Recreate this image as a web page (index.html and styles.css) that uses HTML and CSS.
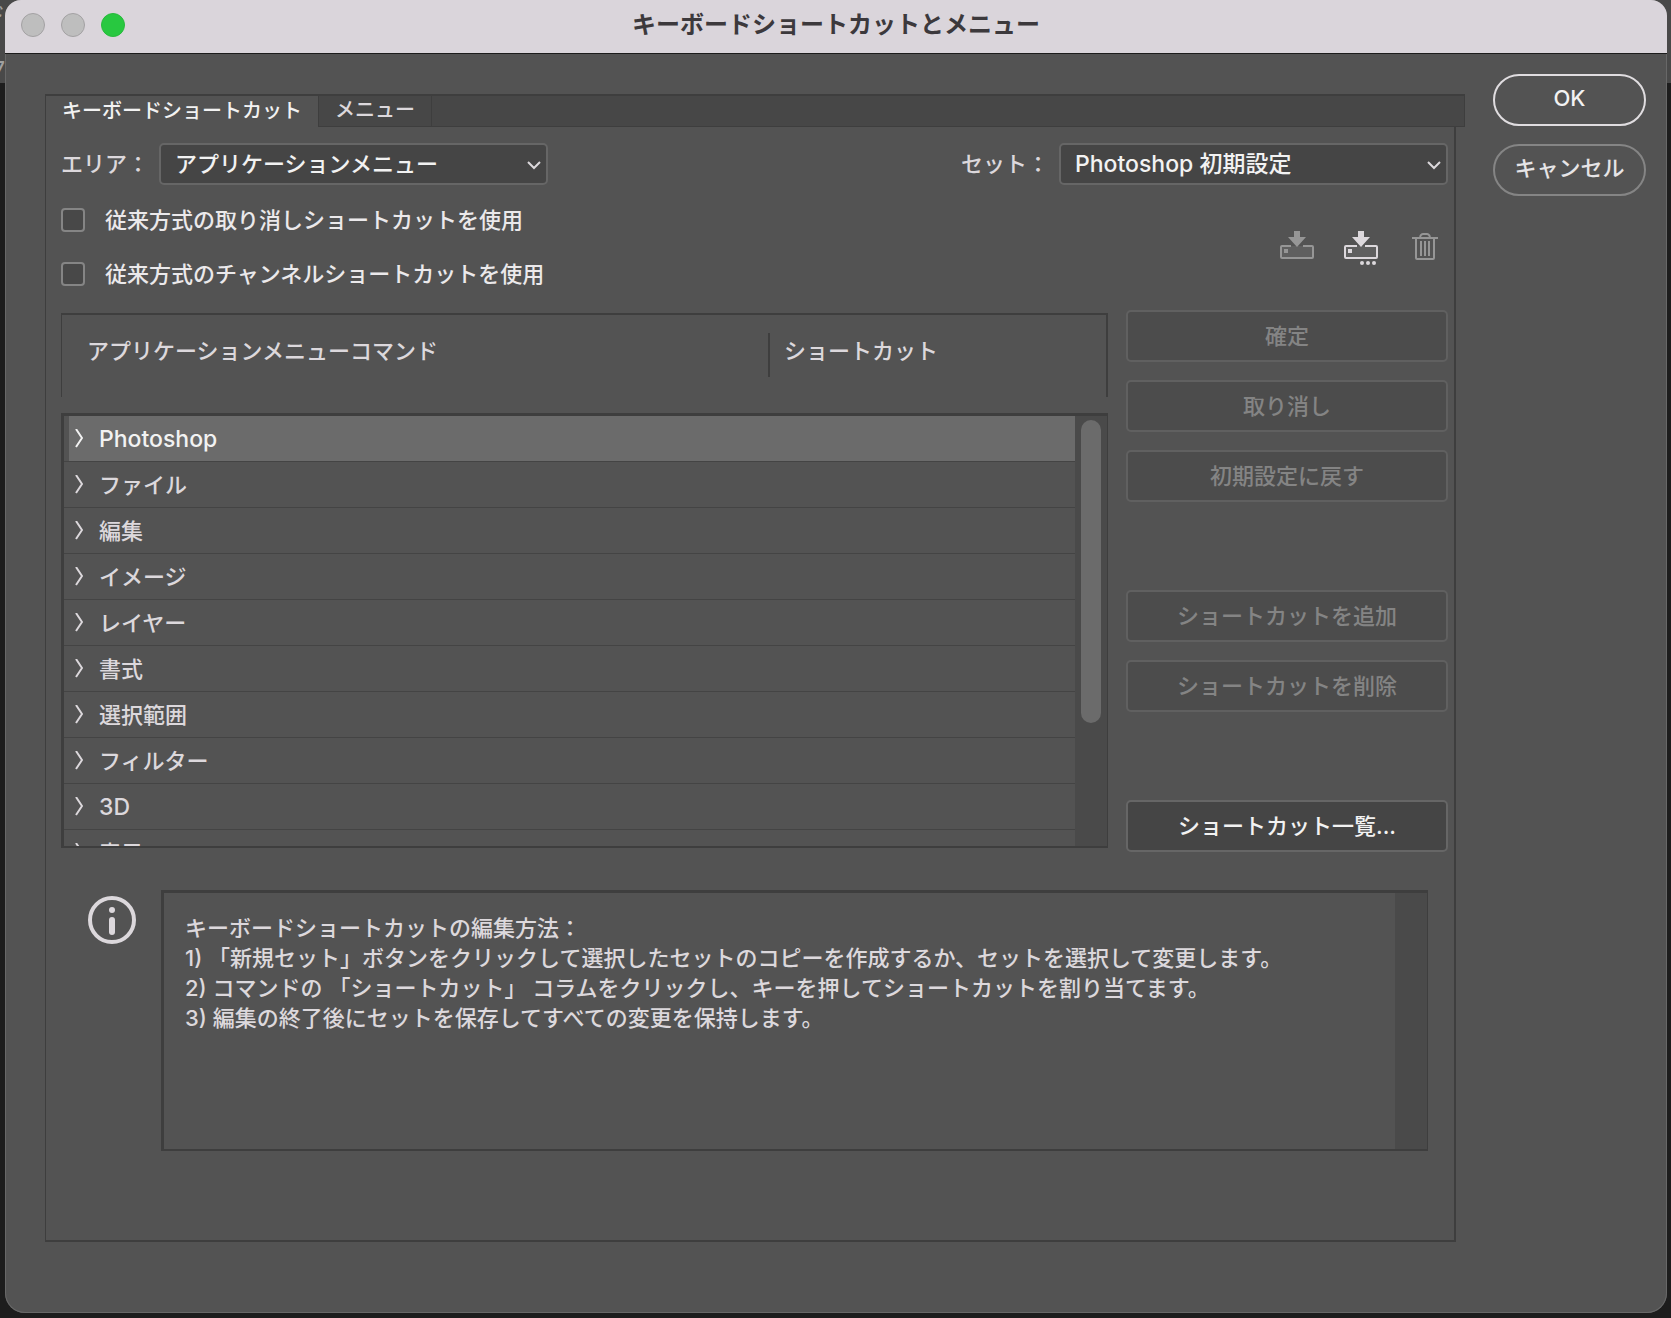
FILE: index.html
```html
<!DOCTYPE html>
<html lang="ja">
<head>
<meta charset="utf-8">
<meta name="viewport" content="width=device-width, initial-scale=1">
<title>キーボードショートカットとメニュー</title>
<link rel="stylesheet" href="styles.css">
</head>
<body>
<div class="backdrop" aria-hidden="true"><span>ド</span><span>7</span></div>
<main class="window">
  <header class="titlebar">
    <div class="lights">
      <button class="light" type="button" aria-label="閉じる"></button>
      <button class="light" type="button" aria-label="しまう"></button>
      <button class="light light-zoom" type="button" aria-label="拡大"></button>
    </div>
    <h1 class="title">キーボードショートカットとメニュー</h1>
  </header>

  <form class="content">
    <section class="panel">
      <div class="tabs" role="tablist">
        <button class="tab tab-active" type="button" role="tab" aria-selected="true">キーボードショートカット</button>
        <button class="tab" type="button" role="tab" aria-selected="false">メニュー</button>
      </div>

      <div class="panel-body">
        <div class="selectors">
          <div class="field">
            <label for="area">エリア：</label>
            <div class="select">
              <select id="area"><option>アプリケーションメニュー</option></select>
              <svg class="select-arrow" viewBox="0 0 14 9"><path d="M1 1l6 6 6-6"/></svg>
            </div>
          </div>
          <div class="field">
            <label for="set">セット：</label>
            <div class="select">
              <select id="set" class="latin"><option>Photoshop 初期設定</option></select>
              <svg class="select-arrow" viewBox="0 0 14 9"><path d="M1 1l6 6 6-6"/></svg>
            </div>
          </div>
        </div>

        <div class="options">
          <div class="checks">
            <label class="check"><input type="checkbox">従来方式の取り消しショートカットを使用</label>
            <label class="check"><input type="checkbox">従来方式のチャンネルショートカットを使用</label>
          </div>
          <div class="set-actions">
            <button class="icon-button icon-dim" type="button" aria-label="セットを保存">
              <svg width="34" height="36" viewBox="0 0 34 36">
                <path class="tint" d="M2 15h30v11H2z"/>
                <path class="fill" d="M14 0h6v6h6l-9 10-9-10h6z"/>
                <path class="line" d="M11 15H2q-1 0-1 1v10q0 1 1 1h30q1 0 1-1V16q0-1-1-1h-9"/>
                <path class="fill" d="M4 18h4v4H4z"/>
              </svg>
            </button>
            <button class="icon-button" type="button" aria-label="新規セットを作成">
              <svg width="34" height="36" viewBox="0 0 34 36">
                <path class="tint" d="M2 15h30v11H2z"/>
                <path class="fill" d="M14 0h6v6h6l-9 10-9-10h6z"/>
                <path class="line" d="M13 15H2q-1 0-1 1v10q0 1 1 1h30q1 0 1-1V16q0-1-1-1H21"/>
                <path class="fill" d="M4 18h4v4H4z"/>
                <circle class="fill" cx="18" cy="32" r="2"/><circle class="fill" cx="24" cy="32" r="2"/><circle class="fill" cx="30" cy="32" r="2"/>
              </svg>
            </button>
            <button class="icon-button icon-dim" type="button" aria-label="セットを削除">
              <svg width="26" height="36" viewBox="0 0 26 36">
                <path class="line" d="M0 7h26M8 6q1-3 3-3h4q2 0 3 3M4 8v19q0 1 1 1h16q1 0 1-1V8M9 10v15M13 10v15M17 10v15"/>
              </svg>
            </button>
          </div>
        </div>

        <div class="editor">
          <table class="commands">
            <thead>
              <tr><th scope="col">アプリケーションメニューコマンド</th><th scope="col">ショートカット</th></tr>
            </thead>
            <tbody>
              <tr class="selected"><td class="latin"><svg class="chevron" viewBox="0 0 8 20"><path d="M1 0l6 9-6 9"/></svg>Photoshop</td></tr>
              <tr><td><svg class="chevron" viewBox="0 0 8 20"><path d="M1 0l6 9-6 9"/></svg>ファイル</td></tr>
              <tr><td><svg class="chevron" viewBox="0 0 8 20"><path d="M1 0l6 9-6 9"/></svg>編集</td></tr>
              <tr><td><svg class="chevron" viewBox="0 0 8 20"><path d="M1 0l6 9-6 9"/></svg>イメージ</td></tr>
              <tr><td><svg class="chevron" viewBox="0 0 8 20"><path d="M1 0l6 9-6 9"/></svg>レイヤー</td></tr>
              <tr><td><svg class="chevron" viewBox="0 0 8 20"><path d="M1 0l6 9-6 9"/></svg>書式</td></tr>
              <tr><td><svg class="chevron" viewBox="0 0 8 20"><path d="M1 0l6 9-6 9"/></svg>選択範囲</td></tr>
              <tr><td><svg class="chevron" viewBox="0 0 8 20"><path d="M1 0l6 9-6 9"/></svg>フィルター</td></tr>
              <tr><td class="latin"><svg class="chevron" viewBox="0 0 8 20"><path d="M1 0l6 9-6 9"/></svg>3D</td></tr>
              <tr><td><svg class="chevron" viewBox="0 0 8 20"><path d="M1 0l6 9-6 9"/></svg>表示</td></tr>
            </tbody>
          </table>

          <div class="edit-actions">
            <div class="button-group">
              <button class="button" type="button" disabled>確定</button>
              <button class="button" type="button" disabled>取り消し</button>
              <button class="button" type="button" disabled>初期設定に戻す</button>
            </div>
            <div class="button-group">
              <button class="button" type="button" disabled>ショートカットを追加</button>
              <button class="button" type="button" disabled>ショートカットを削除</button>
            </div>
            <div class="button-group">
              <button class="button" type="button">ショートカット一覧...</button>
            </div>
          </div>
        </div>

        <div class="help">
          <svg class="info-icon" viewBox="0 0 50 50">
            <circle cx="25" cy="25" r="22"/>
            <path d="M25 25v12"/>
            <circle class="dot" cx="25" cy="15" r="3"/>
          </svg>
          <div class="help-box">
            <p>キーボードショートカットの編集方法：</p>
            <p>1) 「新規セット」ボタンをクリックして選択したセットのコピーを作成するか、セットを選択して変更します。</p>
            <p>2) コマンドの 「ショートカット」 コラムをクリックし、キーを押してショートカットを割り当てます。</p>
            <p>3) 編集の終了後にセットを保存してすべての変更を保持します。</p>
          </div>
        </div>
      </div>
    </section>

    <aside class="dialog-actions">
      <button class="pill pill-primary" type="button">OK</button>
      <button class="pill" type="button">キャンセル</button>
    </aside>
  </form>
</main>
</body>
</html>
```
FILE: styles.css
```css
:root {
  --bg: #535353;
  --well: #454545;
  --well-dim: #4c4c4c;
  --line: #3e3e3e;
  --edge: #666;
  --text: #dcd8dc;
  --text-strong: #f2f2f2;
}

* { box-sizing: border-box; }

body {
  margin: 0;
  min-height: 100vh;
  padding: 0 4px 5px 5px;
  display: flex;
  background: linear-gradient(#494949 83px, #1d1d1d 83px);
  color: var(--text);
  font: 500 22px/30px Inter, "Noto Sans CJK JP", sans-serif;
}

h1, p { margin: 0; }

button, select {
  font: inherit;
  color: inherit;
  cursor: pointer;
}

svg {
  display: block;
  fill: none;
  stroke: currentColor;
  stroke-width: 2;
}

.latin { font-size: 23px; }

.backdrop {
  position: absolute;
  top: 0;
  left: 0;
  width: 5px;
  height: 83px;
  overflow: hidden;
  display: flex;
  flex-direction: column;
  align-items: flex-end;
  gap: 24px;
  color: #a0a0a0;
  font-size: 20px;
}

.window {
  position: relative;
  flex: 1;
  min-width: 0;
  display: flex;
  flex-direction: column;
  overflow: hidden;
  border-radius: 16px 16px 20px 20px;
  background: var(--bg);
  box-shadow: inset 0 0 0 1px #686868;
}

.titlebar {
  display: grid;
  grid-template-columns: 1fr auto 1fr;
  align-items: center;
  height: 54px;
  padding: 0 16px 3px;
  border-bottom: 1px solid #1c1c1c;
  background: #dad5db;
  color: #3c393c;
}

.title {
  font-size: 24px;
  line-height: 32px;
  font-weight: 700;
}

.lights { display: flex; gap: 16px; }

.light {
  width: 24px;
  height: 24px;
  padding: 0;
  border: 1px solid #a3a1a3;
  border-radius: 50%;
  background: #bebebe;
}

.light-zoom { border-color: #28b93c; background: #28c840; }

.content {
  flex: 1;
  display: flex;
  gap: 28px;
  padding: 20px 21px 71px 40px;
}

.panel {
  flex: 1;
  min-width: 0;
  display: flex;
  flex-direction: column;
  padding-top: 20px;
}

.tabs {
  display: flex;
  height: 33px;
  border: 1px solid var(--line);
  border-top-width: 2px;
  background: #474747;
}

.tab {
  padding: 0 16px 2px;
  border: 0;
  border-right: 1px solid var(--line);
  background: none;
  font-size: 20px;
  line-height: 28px;
}

.tab-active {
  margin-bottom: -1px;
  background: var(--bg);
  color: var(--text-strong);
}

.panel-body {
  flex: 1;
  margin-right: 9px;
  padding: 16px 6px 0 15px;
  border: solid var(--line);
  border-width: 0 2px 2px 1px;
}

.selectors { display: flex; justify-content: space-between; }

.field { display: flex; align-items: center; gap: 10px; }

.select { position: relative; width: 389px; }

.select select {
  appearance: none;
  display: block;
  width: 100%;
  height: 42px;
  padding: 0 40px 0 14px;
  border: 2px solid var(--edge);
  border-radius: 5px;
  background: var(--well);
  color: var(--text-strong);
}

.select-arrow {
  position: absolute;
  top: 18px;
  right: 7px;
  width: 14px;
  height: 9px;
  pointer-events: none;
}

.options {
  display: flex;
  justify-content: space-between;
  padding: 20px 10px 0 0;
}

.checks { display: flex; flex-direction: column; gap: 24px; }

.check {
  display: flex;
  align-items: center;
  gap: 20px;
  color: #ebe9eb;
}

.check input {
  appearance: none;
  width: 24px;
  height: 24px;
  margin: 0;
  border: 2px solid #858585;
  border-radius: 4px;
  background: #484848;
}

.set-actions { display: flex; align-items: flex-start; gap: 30px; padding-top: 26px; }

.icon-button {
  padding: 0;
  border: 0;
  background: none;
}

.icon-button:last-child { margin-left: 4px; }
.icon-dim { color: #969696; }
.icon-button .fill { fill: currentColor; stroke: none; }
.icon-button .tint { fill: #5f5f5f; stroke: none; }

.editor {
  display: flex;
  gap: 18px;
  padding-top: 21px;
}

.commands {
  flex: 1;
  min-width: 0;
  display: flex;
  flex-direction: column;
  gap: 16px;
  padding-top: 3px;
}

.commands thead {
  display: block;
  height: 84px;
  padding-top: 18px;
  border: solid var(--line);
  border-width: 2px 2px 0 1px;
}

.commands thead tr {
  display: grid;
  grid-template-columns: 706px 1fr;
}

.commands th {
  padding: 3px 25px 11px;
  text-align: left;
  font-weight: 500;
}

.commands th + th {
  padding-left: 14px;
  border-left: 2px solid var(--line);
}

.commands tbody {
  position: relative;
  display: block;
  height: 435px;
  overflow: hidden;
  padding-right: 32px;
  border: solid var(--line);
  border-width: 3px 1px 2px 3px;
  background: linear-gradient(#4a4a4a, #4a4a4a) right / 32px 100% no-repeat;
}

.commands tbody::after {
  content: "";
  position: absolute;
  top: 4px;
  right: 6px;
  width: 20px;
  height: 303px;
  border-radius: 10px;
  background: #6b6b6b;
}

.commands tbody tr {
  display: block;
  padding-left: 5px;
  border-bottom: 1px solid #444;
}

.commands td {
  display: flex;
  align-items: center;
  gap: 16px;
  height: 45px;
  padding: 0 6px;
}

.commands .selected td {
  background: #6b6b6b;
  color: var(--text-strong);
}

.chevron { width: 8px; height: 20px; }

.edit-actions {
  display: flex;
  flex-direction: column;
  gap: 88px;
  width: 322px;
}

.button-group { display: flex; flex-direction: column; gap: 18px; }

.button {
  height: 52px;
  padding: 0;
  border: 2px solid var(--edge);
  border-radius: 5px;
  background: var(--well);
  color: var(--text-strong);
}

.button:disabled {
  border-color: #606060;
  background: var(--well-dim);
  color: #848484;
  cursor: default;
}

.help {
  display: flex;
  align-items: flex-start;
  gap: 24px;
  padding: 38px 20px 88px 26px;
}

.info-icon {
  width: 50px;
  height: 50px;
  margin-top: 5px;
  stroke-width: 4;
}

.info-icon path { stroke-width: 6; stroke-linecap: round; }
.info-icon .dot { fill: currentColor; stroke: none; }

.help-box {
  flex: 1;
  min-height: 261px;
  padding: 20px 50px 20px 21px;
  border: solid var(--line);
  border-width: 3px 1px 2px 3px;
  background: linear-gradient(#4a4a4a, #4a4a4a) right / 32px 100% no-repeat;
}

.dialog-actions {
  display: flex;
  flex-direction: column;
  gap: 18px;
  width: 153px;
}

.pill {
  height: 52px;
  padding: 0 0 4px;
  border: 2px solid #858585;
  border-radius: 26px;
  background: none;
  color: #e6e4e6;
}

.pill-primary { border-color: #e0dde0; color: var(--text-strong); }
```
